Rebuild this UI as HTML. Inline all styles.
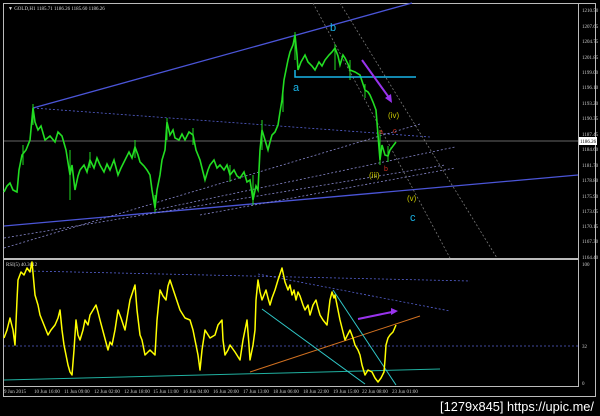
<!DOCTYPE html><html><head><meta charset="utf-8"><style>
html,body{margin:0;padding:0;background:#000;width:600px;height:416px;overflow:hidden}
svg{display:block}
.s{font-family:"Liberation Serif",serif}
.a{font-family:"Liberation Sans",sans-serif}
.m{font-family:"Liberation Mono",monospace}
</style></head><body>
<svg width="600" height="416" viewBox="0 0 600 416" xmlns="http://www.w3.org/2000/svg">
<rect width="600" height="416" fill="#000"/>
<rect x="3.5" y="3.5" width="592" height="393" fill="none" stroke="#bbb" stroke-width="1"/>
<line x1="578.5" y1="3" x2="578.5" y2="387" stroke="#bbb"/>
<line x1="3" y1="259" x2="578" y2="259" stroke="#bbb" stroke-width="2"/>
<line x1="3" y1="386.5" x2="578" y2="386.5" stroke="#bbb"/>
<text class="s" x="8" y="10" font-size="5" fill="#ddd">▼ GOLD,H1  1185.71 1186.26 1185.60 1186.26</text>
<text class="s" x="6" y="266" font-size="5" fill="#ddd">RSI(5) 40.3612</text>
<line x1="4" y1="141" x2="578" y2="141" stroke="#888" stroke-width="0.8"/>
<line x1="33" y1="108" x2="412" y2="3" stroke="#4b55d8" stroke-width="1.3"/>
<line x1="4" y1="226" x2="578" y2="175" stroke="#4b55d8" stroke-width="1.3"/>
<g stroke-dasharray="2,2" stroke-width="0.8" fill="none">
<line x1="33" y1="108" x2="430" y2="137" stroke="#5560d0"/>
<line x1="155" y1="210" x2="455" y2="147" stroke="#8888cc"/>
<line x1="200" y1="215" x2="455" y2="168" stroke="#8888cc"/>
<line x1="4" y1="248" x2="420" y2="124" stroke="#8888cc"/>
<line x1="4" y1="238" x2="445" y2="165" stroke="#8888cc"/>
<line x1="313" y1="3" x2="450" y2="258" stroke="#777"/>
<line x1="340" y1="3" x2="497" y2="258" stroke="#777"/>
</g>
<polyline fill="none" stroke="#22dd22" stroke-width="1.6" stroke-linejoin="miter" points="4,192 7,186 10,183 13,190 17,192 19,170 22,155 26,150 30,140 33,108 35,122 38,130 41,126 45,140 50,136 55,142 58,132 62,136 66,150 70,175 72,165 75,190 78,176 80,170 84,165 87,172 90,160 94,168 97,158 100,165 104,172 107,164 110,170 114,160 118,175 121,168 125,160 129,152 132,158 135,147 138,155 140,162 144,166 147,170 150,175 152,190 155,208 157,190 160,175 162,160 165,150 167,122 170,135 173,130 175,138 179,140 182,134 185,140 189,132 193,135 196,150 200,160 203,172 205,180 208,170 210,165 214,160 217,168 220,165 224,170 227,165 230,175 234,170 237,176 240,178 244,172 247,182 250,180 253,200 256,186 258,190 260,150 262,130 265,140 268,150 270,142 272,135 275,132 278,125 280,112 282,100 284,80 286,70 288,60 290,52 293,45 295,35 297,55 298,70 301,62 305,55 308,62 312,66 315,70 319,62 322,66 325,60 329,55 332,52 335,48 338,56 340,65 343,55 345,58 348,64 350,70 355,72 360,75 363,84 365,90 368,92 370,95 373,102 376,110 378,135 380,160 382,145 385,155 388,156 390,150 393,146 396,142"/>
<g stroke="#22dd22" stroke-width="1">
<path d="M33,104V125M70,150V200M155,195V212M167,118V140M253,175V205M295,32V60M335,44V70M380,130V165M262,120V150M23,145V165M90,152V168M135,140V158M193,128V145M230,165V182M283,92V112M350,60V80M365,84V98M388,146V162"/>
</g>
<path d="M295,70V77H416" stroke="#19b4e8" stroke-width="1.5" fill="none"/>
<line x1="362" y1="60" x2="390" y2="99" stroke="#9933ee" stroke-width="2"/>
<path d="M392,103 L385,98 L391,94Z" fill="#9933ee"/>
<g class="a">
<text class="a" x="330" y="31" font-size="11" fill="#19b4e8">b</text>
<text class="a" x="293" y="91" font-size="11" fill="#19b4e8">a</text>
<text class="a" x="410" y="221" font-size="11" fill="#19b4e8">c</text>
<text class="a" x="388" y="118" font-size="8" fill="#c8c800">(iv)</text>
<text class="a" x="369" y="178" font-size="8" fill="#c8c800">(iii)</text>
<text class="a" x="407" y="201" font-size="8" fill="#c8c800">(v)</text>
<text class="a" x="379" y="134" font-size="7" fill="#d03020">a</text>
<text class="a" x="393" y="133" font-size="7" fill="#d03020">c</text>
<text class="a" x="384" y="171" font-size="7" fill="#d03020">b</text>
</g>
<g class="s" font-size="5" fill="#ccc">
<text x="582" y="12">1210.50</text><text x="582" y="28">1207.65</text><text x="582" y="43">1204.75</text><text x="582" y="59">1201.85</text><text x="582" y="74">1199.00</text><text x="582" y="89">1196.10</text><text x="582" y="105">1193.20</text><text x="582" y="120">1190.35</text><text x="582" y="136">1187.45</text><text x="582" y="151">1184.60</text><text x="582" y="167">1181.70</text><text x="582" y="182">1178.80</text><text x="582" y="198">1175.90</text><text x="582" y="213">1173.05</text><text x="582" y="228">1170.15</text><text x="582" y="243">1167.30</text><text x="582" y="259">1164.40</text>
<text x="582" y="266">100</text><text x="582" y="348">32</text><text x="582" y="385">0</text>
</g>
<rect x="579" y="137" width="18" height="8" fill="#fff"/>
<text class="s" x="580" y="143" font-size="5" fill="#000">1186.26</text>
<g stroke-dasharray="2,2" stroke-width="0.8" fill="none">
<line x1="4" y1="346" x2="578" y2="346" stroke="#5560d0"/>
<line x1="30" y1="271" x2="470" y2="281" stroke="#5560d0"/>
<line x1="258" y1="274" x2="450" y2="311" stroke="#5560d0"/>
</g>
<line x1="4" y1="380" x2="440" y2="369" stroke="#20b0a0" stroke-width="1"/>
<line x1="250" y1="372" x2="420" y2="316" stroke="#d07020" stroke-width="1"/>
<line x1="262" y1="309" x2="365" y2="384" stroke="#30c8c8" stroke-width="1"/>
<line x1="333" y1="290" x2="396" y2="385" stroke="#30c8c8" stroke-width="1"/>
<line x1="358" y1="319" x2="392" y2="312" stroke="#9933ee" stroke-width="2"/>
<path d="M398,311 L391,308 L391,315Z" fill="#9933ee"/>
<polyline fill="none" stroke="#ffff00" stroke-width="1.5" stroke-linejoin="round" points="4,338 7,330 10,318 13,330 15,345 17,300 18,280 21,272 24,275 27,268 30,272 32,262 35,295 38,305 40,315 44,325 48,335 51,330 55,325 58,318 60,310 62,330 64,345 66,355 68,365 70,372 72,375 74,350 76,320 78,335 80,340 83,330 85,320 88,325 90,315 93,310 96,305 98,312 100,320 104,335 108,350 110,342 112,345 115,330 118,310 121,318 125,330 130,300 135,285 137,310 140,335 142,340 145,355 150,350 155,355 157,320 160,290 163,296 166,300 168,286 170,280 175,295 180,310 185,318 190,320 193,330 196,345 198,355 200,370 202,350 205,330 210,338 215,335 218,325 222,320 223,340 225,355 228,350 230,345 235,352 240,360 243,340 247,320 249,345 250,360 253,345 255,330 256,300 258,280 260,292 262,300 264,295 266,290 268,298 270,305 272,298 275,290 278,280 282,268 285,282 288,290 290,285 292,295 294,290 296,300 298,292 300,296 303,305 305,310 308,305 310,315 313,305 316,300 318,308 320,315 323,320 327,325 330,300 332,292 334,298 335,295 338,310 340,320 343,332 345,340 348,334 350,330 353,338 355,345 358,350 360,355 362,365 365,375 368,370 372,372 375,378 378,382 381,378 384,372 385,360 386,345 388,338 390,335 393,332 396,325"/>
<g class="s" font-size="5" fill="#ccc">
<text x="4" y="393">9 Jun 2015</text><text x="34" y="393">10 Jun 16:00</text><text x="64" y="393">11 Jun 09:00</text><text x="94" y="393">12 Jun 02:00</text><text x="124" y="393">12 Jun 18:00</text><text x="153" y="393">15 Jun 11:00</text><text x="183" y="393">16 Jun 04:00</text><text x="213" y="393">16 Jun 20:00</text><text x="243" y="393">17 Jun 13:00</text><text x="273" y="393">18 Jun 06:00</text><text x="303" y="393">18 Jun 22:00</text><text x="333" y="393">19 Jun 15:00</text><text x="362" y="393">22 Jun 08:00</text><text x="392" y="393">23 Jun 01:00</text>
</g>
<text class="a" x="440" y="411" font-size="13" fill="#fff" textLength="154" lengthAdjust="spacingAndGlyphs">[1279x845] https://upic.me/</text>
</svg>
</body></html>
